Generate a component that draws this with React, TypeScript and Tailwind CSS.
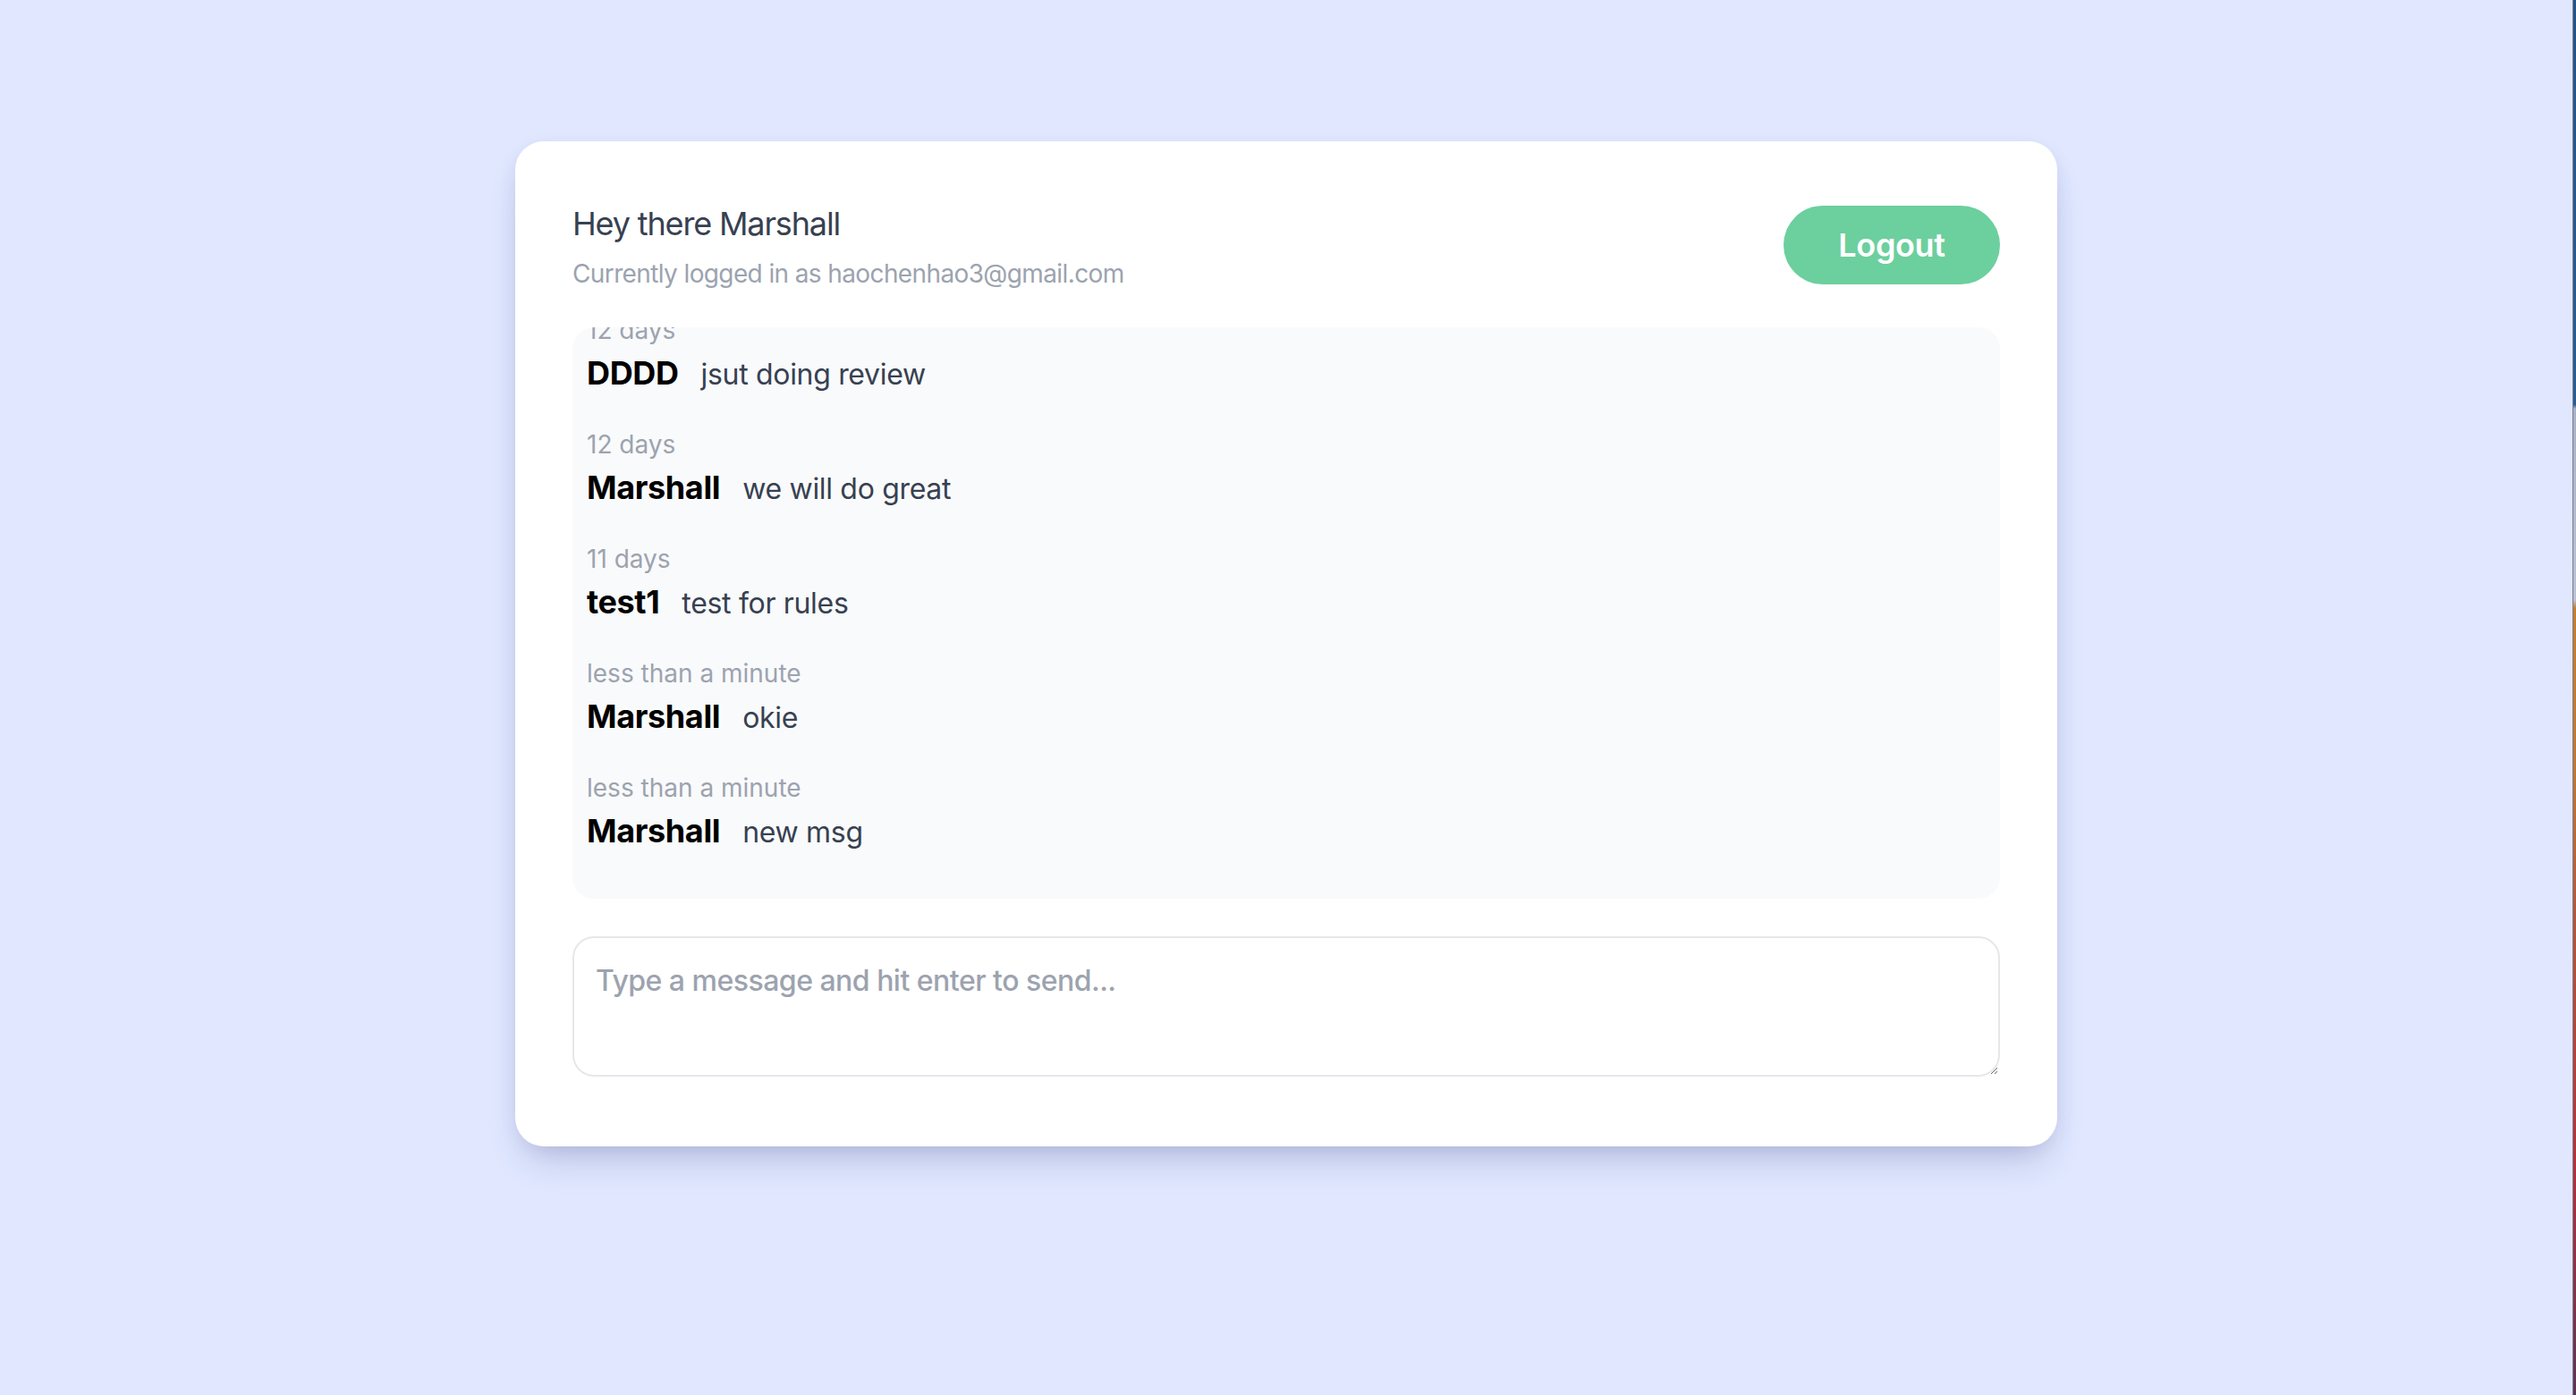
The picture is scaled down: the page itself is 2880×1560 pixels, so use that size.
import React from "react";

type Msg = { time: string; name: string; text: string };

const messages: Msg[] = [
  { time: "12 days", name: "DDDD", text: "jsut doing review" },
  { time: "12 days", name: "Marshall", text: "we will do great" },
  { time: "11 days", name: "test1", text: "test for rules" },
  { time: "less than a minute", name: "Marshall", text: "okie" },
  { time: "less than a minute", name: "Marshall", text: "new msg" },
];

export default function App() {
  return (
    <div className="flex min-h-screen w-full font-['Inter','Noto_Sans',sans-serif]">
      <main className="flex-1 bg-[#e0e7ff] min-h-screen">
        <div className="mx-auto mt-[158px] w-[1724px] rounded-[32px] bg-white px-[64px] pt-[64px] pb-[78px] shadow-[0_24px_40px_-12px_rgba(40,50,110,0.22),0_6px_24px_-6px_rgba(40,50,110,0.12)]">
          <div className="flex h-[104px] items-center justify-between">
            <div className="flex flex-col">
              <div className="text-[36px] leading-[56px] text-[#374151] tracking-[-0.032em]">
                Hey there Marshall
              </div>
              <div className="mt-[8px] text-[28px] leading-[40px] text-[#9ca3af] tracking-[-0.022em]">
                Currently logged in as haochenhao3@gmail.com
              </div>
            </div>
            <button className="flex h-[88px] w-[242px] items-center justify-center rounded-full bg-[#6ccf9e] text-[36px] font-semibold leading-[56px] text-white tracking-[-0.01em]">
              Logout
            </button>
          </div>

          <div className="mt-[40px] flex h-[639px] flex-col justify-end overflow-hidden rounded-[24px] bg-[#f9fafb] px-[16px] py-[16px]">
            {messages.map((m, i) => (
              <div key={i} className="mb-[32px] shrink-0">
                <div className="text-[28px] leading-[40px] text-[#9ca3af]">
                  {m.time}
                </div>
                <div className="flex h-[56px] items-baseline">
                  <span className="text-[36px] font-bold leading-[56px] text-black tracking-[-0.01em]">
                    {m.name}
                  </span>
                  <span className="ml-[25px] text-[32px] leading-[53px] text-[#374151] tracking-[-0.01em]">
                    {m.text}
                  </span>
                </div>
              </div>
            ))}
          </div>

          <textarea
            className="mt-[42px] block h-[157px] w-full rounded-[24px] border-2 border-[#e5e7eb] bg-white px-[24px] py-[24px] text-[32px] font-medium leading-[48px] text-[#374151] outline-none placeholder:text-[#9ca3af] tracking-[-0.016em]"
            placeholder="Type a message and hit enter to send..."
          />
        </div>
      </main>
      <div className="w-[4px] shrink-0 border-l border-[#7a7f90] bg-[linear-gradient(to_bottom,#24528a_0%,#2a5c93_29%,#a9b1c8_29.3%,#bcc2d4_43%,#c3802f_43.6%,#c07834_55%,#b4563a_66%,#b3303d_84%,#5b3453_100%)]" />
    </div>
  );
}
